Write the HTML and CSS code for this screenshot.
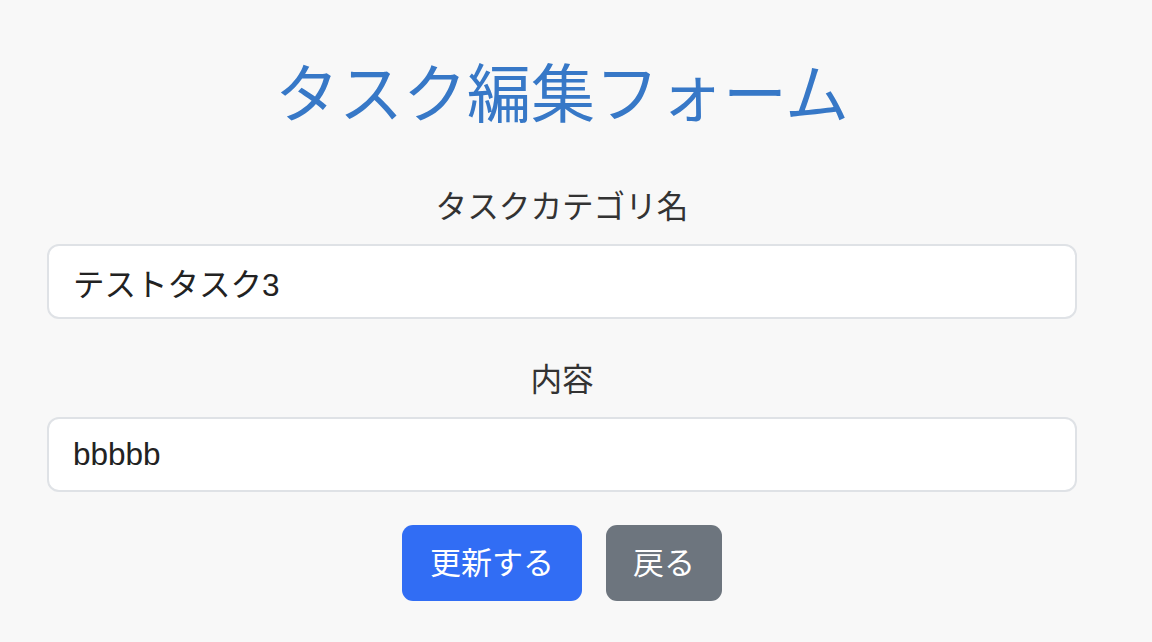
FILE: index.html
```html
<!DOCTYPE html>
<html lang="ja">
<head>
<meta charset="utf-8">
<title>タスク編集フォーム</title>
<link rel="stylesheet" href="styles.css">
</head>
<body>
<main class="container">
  <h1 class="title">タスク編集フォーム</h1>
  <form class="form">
    <div class="field">
      <label class="label" for="category">タスクカテゴリ名</label>
      <input class="input" id="category" type="text" value="テストタスク3">
    </div>
    <div class="field">
      <label class="label" for="content">内容</label>
      <input class="input" id="content" type="text" value="bbbbb">
    </div>
    <div class="actions">
      <button type="submit" class="btn btn-primary">更新する</button>
      <button type="button" class="btn btn-secondary">戻る</button>
    </div>
  </form>
</main>
</body>
</html>
```
FILE: styles.css
```css
html, body {
  margin: 0;
  padding: 0;
  background: #f8f8f8;
  font-family: "Liberation Sans", "Noto Sans CJK JP", sans-serif;
  color: #212529;
}
.container {
  margin-left: 47px;
  width: 1030px;
  padding-top: 50px;
}
.title {
  margin: 0;
  font-family: "Noto Sans CJK JP", sans-serif;
  font-weight: 400;
  font-size: 64px;
  line-height: 78px;
  text-align: center;
  color: #3778c7;
}
.form {
  display: flex;
  flex-direction: column;
}
.field {
  display: flex;
  flex-direction: column;
}
.field:first-child {
  margin-top: 54px;
}
.field + .field {
  margin-top: 36px;
}
.label {
  font-family: "Noto Sans CJK JP", sans-serif;
  font-size: 31.6px;
  line-height: 45px;
  text-align: center;
  color: #333;
  margin-bottom: 17px;
}
.input {
  box-sizing: border-box;
  height: 75px;
  width: 100%;
  border: 2px solid #dfe2e6;
  border-radius: 12px;
  background: #fff;
  padding: 0 24px;
  font-family: "Liberation Sans", "Noto Sans CJK JP", sans-serif;
  font-size: 31.5px;
  color: #222;
  outline: none;
}
.actions {
  margin-top: 33px;
  display: flex;
  justify-content: center;
  gap: 24px;
}
.btn {
  height: 76px;
  border: none;
  border-radius: 11px;
  padding: 0 0 5px;
  font-family: "Noto Sans CJK JP", sans-serif;
  font-size: 31px;
  color: #fff;
  cursor: pointer;
}
.btn-primary {
  background: #316df4;
  width: 180px;
}
.btn-secondary {
  background: #6d757e;
  width: 116px;
}
```
